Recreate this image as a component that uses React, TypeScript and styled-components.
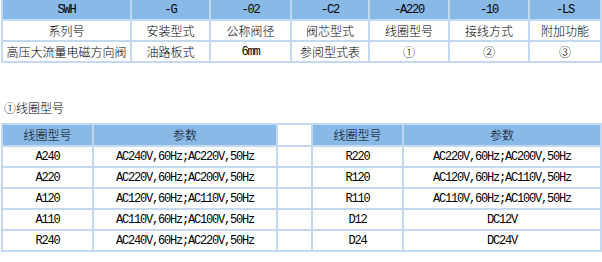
import styled, { createGlobalStyle } from "styled-components";

const GlobalStyle = createGlobalStyle`
  html, body {
    margin: 0;
    padding: 0;
    background: #ffffff;
  }
  body {
    font-family: "Noto Sans CJK SC", sans-serif;
    font-size: 12px;
    color: #000000;
  }
`;

type Cell = { text: string; latin?: boolean };

const modelHead: Cell[] = [
  { text: "SWH", latin: true },
  { text: "-G", latin: true },
  { text: "-02", latin: true },
  { text: "-C2", latin: true },
  { text: "-A220", latin: true },
  { text: "-10", latin: true },
  { text: "-LS", latin: true },
];

const modelRows: Cell[][] = [
  [
    { text: "系列号" },
    { text: "安装型式" },
    { text: "公称阀径" },
    { text: "阀芯型式" },
    { text: "线圈型号" },
    { text: "接线方式" },
    { text: "附加功能" },
  ],
  [
    { text: "高压大流量电磁方向阀" },
    { text: "油路板式" },
    { text: "6mm", latin: true },
    { text: "参阅型式表" },
    { text: "①" },
    { text: "②" },
    { text: "③" },
  ],
];

const coils: [string, string, string, string][] = [
  ["A240", "AC240V,60Hz;AC220V,50Hz", "R220", "AC220V,60Hz;AC200V,50Hz"],
  ["A220", "AC220V,60Hz;AC200V,50Hz", "R120", "AC120V,60Hz;AC110V,50Hz"],
  ["A120", "AC120V,60Hz;AC110V,50Hz", "R110", "AC110V,60Hz;AC100V,50Hz"],
  ["A110", "AC110V,60Hz;AC100V,50Hz", "D12", "DC12V"],
  ["R240", "AC240V,60Hz;AC220V,50Hz", "D24", "DC24V"],
];

function App() {
  return (
    <Page>
      <GlobalStyle />
      <ModelGrid>
        {modelHead.map((c) => (
          <Td key={c.text} $head $latin={c.latin}>
            {c.text}
          </Td>
        ))}
        {modelRows.map((row, i) =>
          row.map((c, j) => (
            <Td key={i + "-" + j} $latin={c.latin}>
              {c.text}
            </Td>
          ))
        )}
      </ModelGrid>

      <Title>①线圈型号</Title>

      <CoilGrid>
        <Td $head>线圈型号</Td>
        <Td $head>参数</Td>
        <Td />
        <Td $head>线圈型号</Td>
        <Td $head>参数</Td>
        {coils.map(([a, b, c, d]) => [
          <Td key={a} $latin>{a}</Td>,
          <Td key={a + "p"} $latin>{b}</Td>,
          <Td key={a + "x"} />,
          <Td key={c} $latin>{c}</Td>,
          <Td key={c + "p"} $latin>{d}</Td>,
        ])}
      </CoilGrid>
    </Page>
  );
}

const Page = styled.div`
  width: 602px;
  display: flex;
  flex-direction: column;
  padding-left: 1px;
  box-sizing: border-box;
`;

const Grid = styled.div`
  display: grid;
  gap: 2px;
  padding: 2px;
  background: #c3d9f1;
`;

const ModelGrid = styled(Grid)`
  padding-top: 0;
  grid-template-columns: 127px 77px 79px 76px 78px 78px 70px;
  grid-auto-rows: 19px;
`;

const CoilGrid = styled(Grid)`
  grid-template-columns: 89px 182px 33px 89px 196px;
  grid-template-rows: 20px;
  grid-auto-rows: 19px;
`;

const Td = styled.div<{ $head?: boolean; $latin?: boolean }>`
  display: flex;
  align-items: center;
  justify-content: center;
  white-space: nowrap;
  background: ${({ $head }) => ($head ? "#88b9e7" : "#ffffff")};
  font-family: ${({ $latin }) =>
    $latin
      ? `"Liberation Mono", "Noto Sans CJK SC", monospace`
      : `"Noto Sans CJK SC", sans-serif`};
  font-weight: ${({ $latin }) => ($latin ? 400 : 300)};
  letter-spacing: ${({ $latin }) => ($latin ? "-1.2px" : "0")};
  font-size: 12px;
  line-height: 1;
  color: #000000;
`;

const Title = styled.div`
  margin: 35px 0 5px;
  padding-left: 3px;
  height: 20px;
  line-height: 20px;
  font-size: 12px;
  font-weight: 300;
`;

export default App;
